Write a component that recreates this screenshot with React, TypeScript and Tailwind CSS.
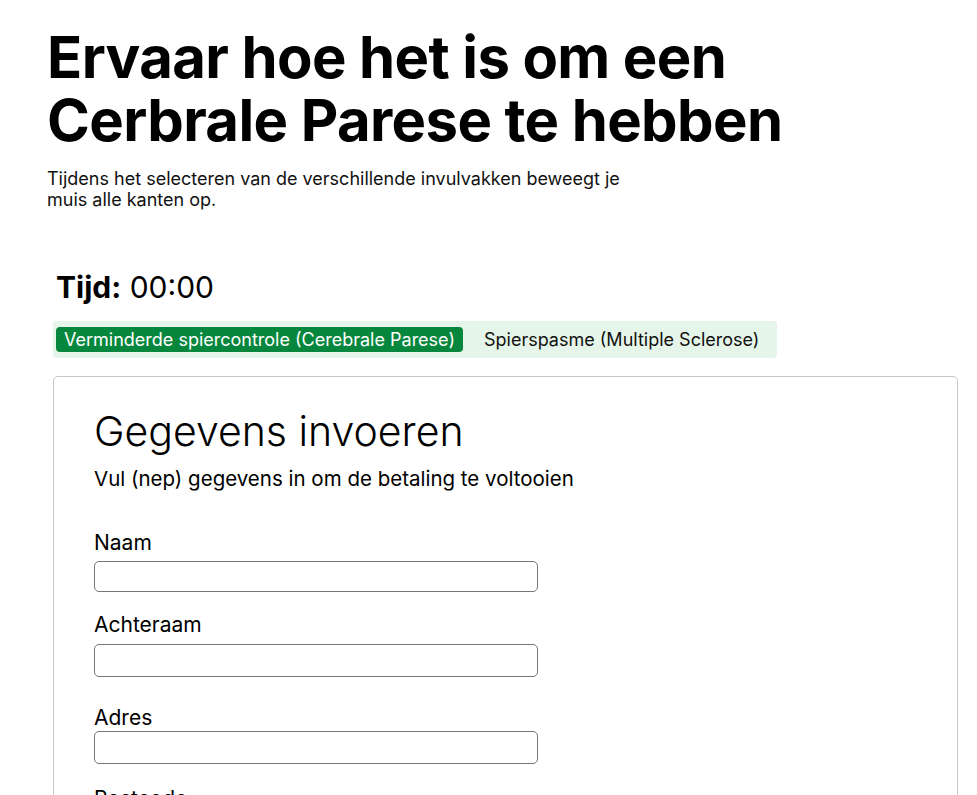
import React from "react";

const font = { fontFamily: "Inter, 'Noto Sans', sans-serif" };

function Field({ label, mt, gap, h }: { label: string; mt: string; gap: string; h: string }) {
  return (
    <div className={mt}>
      <label className="block text-[21px] leading-[26px] text-black">{label}</label>
      <input className={`${gap} block w-[444px] ${h} rounded-[5px] border border-[#767676] bg-white`} />
    </div>
  );
}

export default function App() {
  return (
    <div className="h-[795px] bg-white text-black overflow-hidden" style={font}>
      <div className="pl-[47px] pt-[26px]">
        <h1 className="text-[58px] font-bold leading-[63px] tracking-[-0.6px]">
          <span className="block">Ervaar hoe het is om een</span>
          <span className="block">Cerbrale Parese te hebben</span>
        </h1>
        <p className="mt-[16px] text-[18px] leading-[21px] text-[#111]">
          <span className="block">Tijdens het selecteren van de verschillende invulvakken beweegt je</span>
          <span className="block">muis alle kanten op.</span>
        </p>
      </div>
      <div className="ml-[53px] mt-[57px] w-[905px]">
        <div className="pl-[3px] text-[30px] leading-[40px]">
          <span className="font-bold">Tijd:</span> 00:00
        </div>
        <div className="mt-[14px] flex h-[37px] w-[724px] items-center gap-[21px] rounded-[4px] bg-[#e6f5e9] px-[3px]">
          <div className="flex h-[25px] items-center rounded-[4px] bg-[#07873d] px-[8px] text-[18px] text-white">
            Verminderde spiercontrole (Cerebrale Parese)
          </div>
          <div className="text-[18px] text-[#111]">Spierspasme (Multiple Sclerose)</div>
        </div>
        <div className="mt-[18px] h-[460px] rounded-[5px] border border-[#c8c8c8] px-[40px] pt-[28px]">
          <h2 className="text-[41px] font-light leading-[52px]">Gegevens invoeren</h2>
          <p className="mt-[10px] text-[20.5px] leading-[24px]">Vul (nep) gegevens in om de betaling te voltooien</p>
          <Field label="Naam" mt="mt-[39px]" gap="mt-[5px]" h="h-[31px]" />
          <Field label="Achteraam" mt="mt-[20px]" gap="mt-[6px]" h="h-[33px]" />
          <Field label="Adres" mt="mt-[28px]" gap="mt-[0px]" h="h-[33px]" />
          <Field label="Postcode" mt="mt-[22px]" gap="mt-[4px]" h="h-[33px]" />
        </div>
      </div>
    </div>
  );
}
